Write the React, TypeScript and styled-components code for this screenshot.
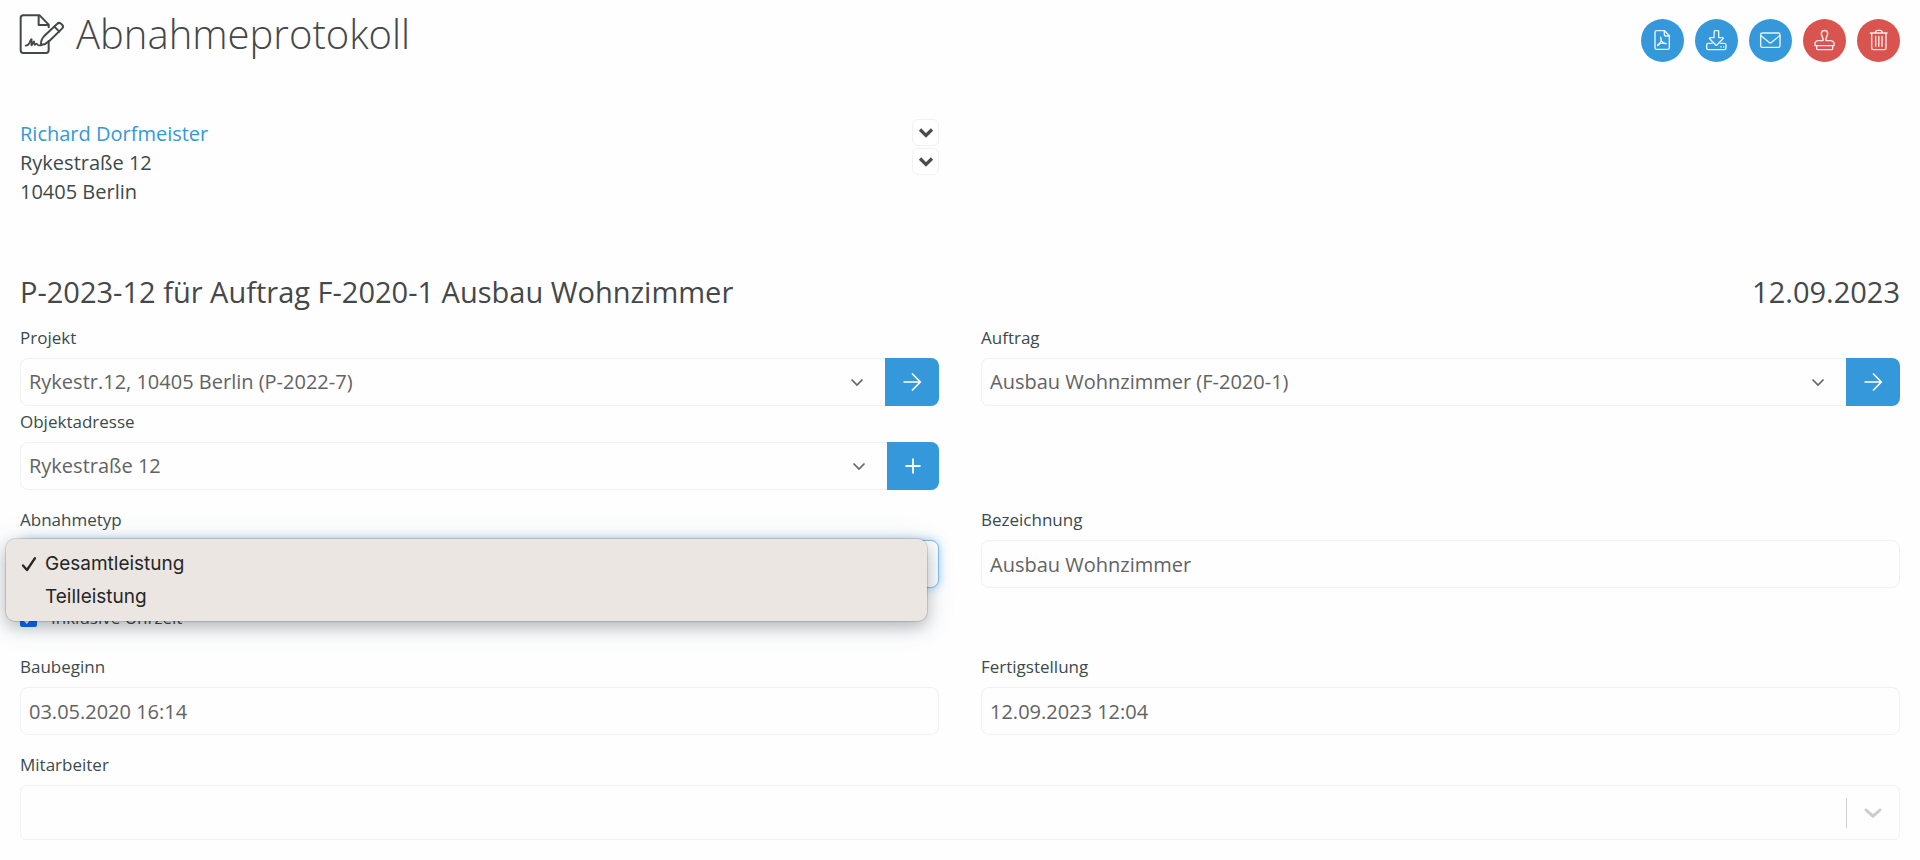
import React from "react";
import styled, { createGlobalStyle, css } from "styled-components";

const BLUE = "#3498db";
const RED = "#d9534f";
const LINE = "#eff1f2";

const GlobalStyle = createGlobalStyle`
  *, *::before, *::after { box-sizing: border-box; }
  body {
    margin: 0;
    background: #fefefe;
    color: #3c4a4a;
    font-family: "Open Sans", "Noto Sans", sans-serif;
    font-size: 20px;
    line-height: 28px;
  }
  button, input, select { font: inherit; }
`;

const Page = styled.main`
  padding: 14px 20px 16px;
`;

const Header = styled.header`
  display: flex;
  justify-content: space-between;
  align-items: flex-start;
`;

const Title = styled.h1`
  display: flex;
  align-items: flex-start;
  gap: 10px;
  margin: 0;
  color: #444849;
  font-size: 40px;
  font-weight: 300;
  line-height: 40px;
`;

const Actions = styled.div`
  display: flex;
  gap: 11px;
  padding-top: 5px;
`;

const RoundButton = styled.button<{ $danger?: boolean }>`
  width: 43px;
  height: 43px;
  padding: 0;
  border: 0;
  border-radius: 50%;
  background: ${(p) => (p.$danger ? RED : BLUE)};
  cursor: pointer;
  svg { display: block; width: 43px; height: 43px; }
`;

const Columns = styled.div`
  display: grid;
  grid-template-columns: 1fr 1fr;
  column-gap: 42px;
  align-items: start;
`;

const Recipient = styled.section`
  display: flex;
  justify-content: space-between;
  margin-top: 57px;
`;

const Address = styled.address`
  display: flex;
  flex-direction: column;
  gap: 1px;
  padding-top: 1px;
  font-style: normal;
`;

const NameLink = styled.a`
  color: ${BLUE};
  text-decoration: none;
`;

const Toggles = styled.div`
  display: flex;
  flex-direction: column;
  gap: 2px;
`;

const ToggleButton = styled.button`
  display: grid;
  place-items: center;
  width: 27px;
  height: 27px;
  padding: 0;
  border: 1px solid ${LINE};
  border-radius: 6px;
  background: #fff;
  cursor: pointer;
`;

const Subject = styled.h2`
  display: flex;
  justify-content: space-between;
  margin: 65px 0 11px;
  color: #444849;
  font-size: 29px;
  font-weight: 400;
  line-height: 42px;
`;

const FieldBox = styled.div<{ $spaced?: boolean }>`
  display: flex;
  flex-direction: column;
  gap: 6px;
  margin-bottom: ${(p) => (p.$spaced ? 16 : 2)}px;
`;

const Label = styled.label`
  font-size: 17px;
`;

const controlStyle = css`
  width: 100%;
  height: 48px;
  padding: 0 8px;
  border: 1px solid ${LINE};
  border-radius: 8px;
  outline: 0;
  background: #fefefe;
  color: #636363;
`;

const TextInput = styled.input`
  ${controlStyle}
`;

const Group = styled.div`
  display: flex;
`;

const SelectWrap = styled.div`
  position: relative;
  flex: 1;
`;

const SelectArrow = styled.span`
  position: absolute;
  top: 0;
  bottom: 0;
  right: 21px;
  display: flex;
  align-items: center;
  pointer-events: none;
`;

const Select = styled.select<{ $active?: boolean; $joined?: boolean }>`
  ${controlStyle}
  display: block;
  appearance: none;
  ${(p) =>
    p.$joined &&
    css`
      border-right: 0;
      border-radius: 8px 0 0 8px;
    `}
  ${(p) =>
    p.$active &&
    css`
      border-color: #7dbdf5;
      box-shadow: 0 0 10px rgba(102, 175, 233, 0.6);
    `}
`;

const AddonButton = styled.button<{ $narrow?: boolean }>`
  display: grid;
  place-items: center;
  width: ${(p) => (p.$narrow ? 52 : 54)}px;
  padding: 0;
  border: 0;
  border-radius: 0 8px 8px 0;
  background: ${BLUE};
  cursor: pointer;
`;

const CheckRow = styled.label`
  display: flex;
  align-items: center;
  gap: 14px;
  margin-bottom: 21px;
  font-size: 17px;
  input {
    width: 17px;
    height: 17px;
    margin: 0;
    accent-color: #0a6cf0;
  }
`;

const Menu = styled.ul`
  position: absolute;
  z-index: 2;
  top: -1px;
  left: -14px;
  right: 12px;
  margin: 0;
  padding: 8px 0;
  border-radius: 9px;
  background: #ebe6e2;
  box-shadow:
    0 0 0 1px rgba(0, 0, 0, 0.12),
    0 6px 16px rgba(0, 0, 0, 0.22),
    0 4px 30px rgba(40, 80, 120, 0.16);
  color: #262626;
  font-family: Inter, "Liberation Sans", sans-serif;
  font-size: 19px;
  list-style: none;
`;

const MenuItem = styled.li`
  display: grid;
  grid-template-columns: 24px 1fr;
  align-items: center;
  padding-left: 15px;
  line-height: 33px;
`;

const CheckSlot = styled.span`
  display: flex;
`;

const MultiSelect = styled.div`
  display: flex;
  align-items: center;
  height: 55px;
  border: 1px solid ${LINE};
  border-radius: 6px;
  input {
    flex: 1;
    height: 100%;
    padding: 0 8px;
    border: 0;
    outline: 0;
    background: transparent;
  }
`;

const OpenButton = styled.button`
  display: grid;
  place-items: center;
  width: 53px;
  height: 30px;
  padding: 0;
  border: 0;
  border-left: 1px solid #cfcfcf;
  background: transparent;
  cursor: pointer;
`;

const SmallChevron = () => (
  <svg width="14" height="9" viewBox="0 0 14 9" fill="none" stroke="#666" strokeWidth="1.7" aria-hidden="true">
    <path d="M1.500 1.500 7 7l5.500-5.500" />
  </svg>
);

const BoldChevron = ({ color, round }: { color: string; round?: boolean }) => (
  <svg width="20" height="14" viewBox="0 0 20 14" fill="none" stroke={color}
    strokeWidth={round ? 3 : 3.2} strokeLinecap={round ? "round" : "butt"} aria-hidden="true">
    <path d={round ? "M3 4l7 6.2L17 4" : "M4 3.500 10 9.500l6-6"} />
  </svg>
);

const ArrowIcon = () => (
  <svg width="20" height="20" viewBox="0 0 20 20" fill="none" stroke="#fff" strokeWidth="1.6" aria-hidden="true">
    <path d="M1.500 10h16.500M10 1.500 18.300 10 10 18.500" />
  </svg>
);

const PlusIcon = () => (
  <svg width="16" height="16" viewBox="0 0 16 16" fill="none" stroke="#fff" strokeWidth="1.8" aria-hidden="true">
    <path d="M8 .5v15M.5 8h15" />
  </svg>
);

const CheckIcon = () => (
  <svg width="16" height="16" viewBox="0 0 16 16" fill="none" stroke="#262626" strokeWidth="2.4"
    strokeLinecap="round" strokeLinejoin="round" aria-hidden="true">
    <path d="M2 9.500 6 14 14 2.200" />
  </svg>
);

const DocumentIcon = () => (
  <svg width="46" height="40" viewBox="60 42 138 120" fill="none" stroke="#444849" strokeWidth="6"
    strokeLinejoin="round" strokeLinecap="round" overflow="visible" aria-hidden="true">
    <path d="M146 82v-8l-27-28H70q-8 0-8 8v97q0 8 8 8h68q8 0 8-8v-28" />
    <path d="M116 47v28h29" />
    <path d="M123 135q-1-16 9-26l39-37q6-6 12-1l4 4q5 5-1 11l-38 37q-10 10-25 12z" />
    <path d="M163 80l15 15" />
    <path d="M77 137c6 0 9-3 12-10 3-8 6-12 6-8 1 6-3 16-1 17 3 1 5-13 8-12 2 1-1 10 2 11 3 0 3-5 6-4 2 1 2 5 6 5h8" strokeWidth="5" />
  </svg>
);

const ActionIcon = ({ children }: { children: React.ReactNode }) => (
  <svg viewBox="0 0 129 129" fill="none" stroke="#fff" strokeOpacity="0.88" strokeWidth="4.2"
    strokeLinejoin="round" strokeLinecap="round" aria-hidden="true">
    {children}
  </svg>
);

const actions = [
  {
    label: "PDF anzeigen",
    icon: (
      <>
        <path d="M47 35h24l14 15v36q0 5-5 5H47q-5 0-5-5V40q0-5 5-5z" />
        <path d="M70 36v11q0 4 4 4h10" />
        <path d="M59 54c-1 10 4 18 17 20-4 2-9-3-17-1-5 2-6 7-9 7-2-1 1-5 6-7 4-5 6-13 3-19z" strokeWidth="3.4" />
      </>
    ),
  },
  {
    label: "Herunterladen",
    icon: (
      <>
        <path d="M58 36q0-1 2-1h8q3 0 3 2v19h11q4 0 2 3L66 78q-2 2-4 0L44 59q-2-3 2-3h11z" />
        <path d="M51 73H40q-5 0-5 5v9q0 5 5 5h48q5 0 5-5v-9q0-5-5-5H76" />
        <path d="M78 83v1M86 83v1" />
      </>
    ),
  },
  {
    label: "E-Mail senden",
    icon: (
      <>
        <rect x="35" y="42" width="58" height="43" rx="5" />
        <path d="M36 50l24 20q4 3 8 0l24-20" />
      </>
    ),
  },
  {
    label: "Abstempeln",
    danger: true,
    icon: (
      <>
        <path d="M60 65c2-9-5-14-5-21a9.500 9.500 0 0 1 19 0c0 7-7 12-5 21h15q9 1 9 9v6H36v-6q0-8 9-9z" />
        <path d="M41 81v8q0 3 3 3h41q4 0 4-3v-8" />
      </>
    ),
  },
  {
    label: "Löschen",
    danger: true,
    icon: (
      <>
        <path d="M40 42h50M54 41l4-6q1-1 3-1h9q2 0 3 1l4 6" />
        <path d="M44 43v44q0 5 5 5h33q5 0 5-5V43" />
        <path d="M56 52v30M65.500 52v30M75 52v30" />
      </>
    ),
  },
];

type FieldProps = { id: string; label: string; spaced?: boolean; children: React.ReactNode };

const Field = ({ id, label, spaced, children }: FieldProps) => (
  <FieldBox $spaced={spaced}>
    <Label htmlFor={id}>{label}</Label>
    {children}
  </FieldBox>
);

type LinkedSelectProps = { id: string; value: string; action: string; add?: boolean };

const LinkedSelect = ({ id, value, action, add }: LinkedSelectProps) => (
  <Group>
    <SelectWrap>
      <Select id={id} $joined>
        <option>{value}</option>
      </Select>
      <SelectArrow>
        <SmallChevron />
      </SelectArrow>
    </SelectWrap>
    <AddonButton type="button" aria-label={action} $narrow={add}>
      {add ? <PlusIcon /> : <ArrowIcon />}
    </AddonButton>
  </Group>
);

export default function App() {
  return (
    <>
      <GlobalStyle />
      <Page>
        <Header>
          <Title>
            <DocumentIcon />
            <span>Abnahmeprotokoll</span>
          </Title>
          <Actions>
            {actions.map((a) => (
              <RoundButton key={a.label} type="button" aria-label={a.label} $danger={a.danger}>
                <ActionIcon>{a.icon}</ActionIcon>
              </RoundButton>
            ))}
          </Actions>
        </Header>

        <Columns>
          <Recipient>
            <Address>
              <NameLink href="#kontakt">Richard Dorfmeister</NameLink>
              <span>Rykestraße 12</span>
              <span>10405 Berlin</span>
            </Address>
            <Toggles>
              <ToggleButton type="button" aria-label="Kontakt wählen">
                <BoldChevron color="#4c4c4c" />
              </ToggleButton>
              <ToggleButton type="button" aria-label="Adresse wählen">
                <BoldChevron color="#4c4c4c" />
              </ToggleButton>
            </Toggles>
          </Recipient>
        </Columns>

        <Subject>
          <span>P-2023-12 für Auftrag F-2020-1 Ausbau Wohnzimmer</span>
          <time dateTime="2023-09-12">12.09.2023</time>
        </Subject>

        <Columns>
          <div>
            <Field id="projekt" label="Projekt">
              <LinkedSelect id="projekt" value="Rykestr.12, 10405 Berlin (P-2022-7)" action="Projekt öffnen" />
            </Field>
            <Field id="objekt" label="Objektadresse" spaced>
              <LinkedSelect id="objekt" value="Rykestraße 12" action="Adresse hinzufügen" add />
            </Field>
          </div>
          <Field id="auftrag" label="Auftrag">
            <LinkedSelect id="auftrag" value="Ausbau Wohnzimmer (F-2020-1)" action="Auftrag öffnen" />
          </Field>
        </Columns>

        <Columns>
          <div>
            <Field id="typ" label="Abnahmetyp" spaced>
              <SelectWrap>
                <Select id="typ" $active>
                  <option>Gesamtleistung</option>
                  <option>Teilleistung</option>
                </Select>
                <Menu>
                  <MenuItem>
                    <CheckSlot>
                      <CheckIcon />
                    </CheckSlot>
                    <span>Gesamtleistung</span>
                  </MenuItem>
                  <MenuItem>
                    <CheckSlot />
                    <span>Teilleistung</span>
                  </MenuItem>
                </Menu>
              </SelectWrap>
            </Field>
            <CheckRow>
              <input type="checkbox" defaultChecked />
              Inklusive Uhrzeit
            </CheckRow>
          </div>
          <Field id="bezeichnung" label="Bezeichnung">
            <TextInput id="bezeichnung" defaultValue="Ausbau Wohnzimmer" />
          </Field>
        </Columns>

        <Columns>
          <Field id="beginn" label="Baubeginn" spaced>
            <TextInput id="beginn" defaultValue="03.05.2020 16:14" />
          </Field>
          <Field id="ende" label="Fertigstellung" spaced>
            <TextInput id="ende" defaultValue="12.09.2023 12:04" />
          </Field>
        </Columns>

        <Field id="mitarbeiter" label="Mitarbeiter">
          <MultiSelect>
            <input id="mitarbeiter" />
            <OpenButton type="button" aria-label="Mitarbeiter auswählen">
              <BoldChevron color="#cccccc" round />
            </OpenButton>
          </MultiSelect>
        </Field>
      </Page>
    </>
  );
}
